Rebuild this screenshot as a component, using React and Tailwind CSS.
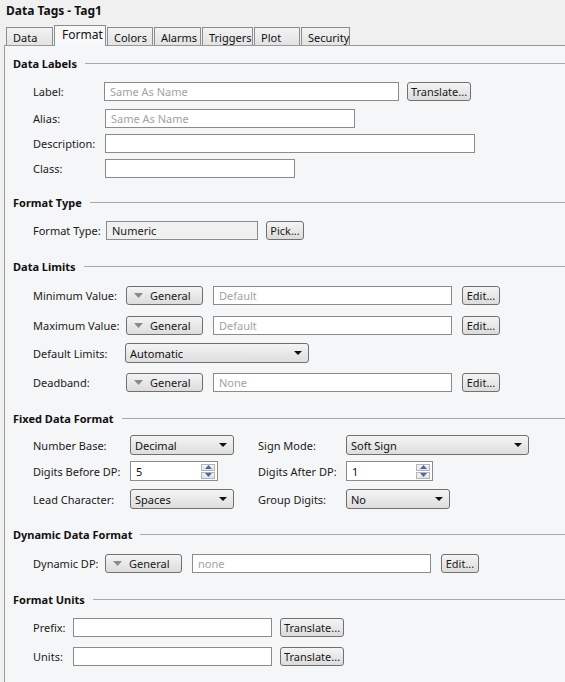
import React from "react";

const FONT = { fontFamily: '"Noto Sans", "Liberation Sans", sans-serif' };

function Heading({ children, className }) {
  return (
    <div className={`flex items-center h-[14px] pl-[8px] ${className}`}>
      <span className="font-bold text-[#111]">{children}</span>
      <div className="flex-1 h-px bg-[#a8a8a8] ml-[8px]" />
    </div>
  );
}

function Row({ className, children }) {
  return <div className={`flex items-center h-[20px] pl-[28px] ${className}`}>{children}</div>;
}

function Label({ w, children }) {
  return <div className={`${w} shrink-0 text-[#1a1a1a]`}>{children}</div>;
}

function Input({ w, placeholder, value, className = "", gray }) {
  return (
    <div
      className={`${w} h-[19px] shrink-0 border border-[#8b8b8b] ${gray ? "bg-[#f0f0f0]" : "bg-white"} flex items-center pl-[5px] ${className}`}
    >
      {placeholder && <span className="text-[#a3a3a3]">{placeholder}</span>}
      {value && <span className="text-[#1a1a1a]">{value}</span>}
    </div>
  );
}

function Btn({ w, children, className = "" }) {
  return (
    <div
      className={`${w} h-[19px] shrink-0 rounded-[3px] border border-[#707070] bg-gradient-to-b from-[#f4f4f4] to-[#dcdcdc] flex items-center justify-center text-[#1a1a1a] ${className}`}
    >
      {children}
    </div>
  );
}

function GeneralBtn() {
  return (
    <div className="w-[77px] h-[19px] shrink-0 rounded-[3px] border border-[#707070] bg-gradient-to-b from-[#f4f4f4] to-[#dcdcdc] flex items-center pl-[7px] text-[#1a1a1a]">
      <svg width="9" height="5" viewBox="0 0 9 5" className="mr-[7px]">
        <path d="M0 0 H9 L4.5 5 Z" fill="#8a8a8a" />
      </svg>
      General
    </div>
  );
}

function Select({ w, value, className = "" }) {
  return (
    <div
      className={`${w} h-[20px] shrink-0 rounded-[3px] border border-[#707070] bg-gradient-to-b from-[#f4f4f4] to-[#dedede] flex items-center justify-between pl-[4px] pr-[6px] text-[#111] ${className}`}
    >
      <span>{value}</span>
      <svg width="8" height="4" viewBox="0 0 8 4">
        <path d="M0 0 H8 L4 4 Z" fill="#111" />
      </svg>
    </div>
  );
}

function Spinner({ w, value, className = "" }) {
  return (
    <div className={`${w} h-[20px] shrink-0 border border-[#8b8b8b] bg-white flex items-center justify-between pl-[5px] pr-[2px] ${className}`}>
      <span className="text-[#111]">{value}</span>
      <div className="flex flex-col gap-px">
        <div className="w-[14px] h-[7px] border border-[#b5b5b5] bg-gradient-to-b from-[#f6f6f6] to-[#e2e2e2] flex items-center justify-center">
          <svg width="7" height="4" viewBox="0 0 7 4">
            <path d="M0 4 H7 L3.5 0 Z" fill="#4a66b3" />
          </svg>
        </div>
        <div className="w-[14px] h-[7px] border border-[#b5b5b5] bg-gradient-to-b from-[#f6f6f6] to-[#e2e2e2] flex items-center justify-center">
          <svg width="7" height="4" viewBox="0 0 7 4">
            <path d="M0 0 H7 L3.5 4 Z" fill="#4a66b3" />
          </svg>
        </div>
      </div>
    </div>
  );
}

const TABS = [
  { name: "Data", w: "w-[47px]" },
  { name: "Format", w: "w-[52px]", active: true },
  { name: "Colors", w: "w-[46px]" },
  { name: "Alarms", w: "w-[47px]" },
  { name: "Triggers", w: "w-[51px]" },
  { name: "Plot", w: "w-[46px]" },
  { name: "Security", w: "w-[49px]" },
];

export default function App() {
  return (
    <div className="w-[565px] h-[682px] overflow-hidden bg-[#f0f0f0] text-[11px] leading-none text-[#111]" style={FONT}>
      {/* title */}
      <div className="h-[22px] flex items-center pl-[6px] font-bold text-[12px]">Data Tags - Tag1</div>

      {/* tabs */}
      <div className="h-[23px] flex items-end pl-[6px] gap-[1px]">
        {TABS.map((t) =>
          t.active ? (
            <div
              key={t.name}
              className={`${t.w} h-[21px] -mb-px relative z-10 bg-[#f7f8f9] border border-b-0 border-[#8d8d8d] flex items-center pl-[7px] pb-[3px] text-[12px] text-[#111]`}
            >
              {t.name}
            </div>
          ) : (
            <div
              key={t.name}
              className={`${t.w} h-[18px] bg-gradient-to-b from-[#f2f2f2] to-[#e3e3e3] border border-b-0 border-[#8d8d8d] flex items-center pl-[6px] pt-[2px] text-[#111]`}
            >
              {t.name}
            </div>
          )
        )}
      </div>

      {/* content */}
      <div className="ml-[4px] h-[640px] border-l border-t border-[#9a9a9a] bg-[#f5f6f7] pt-px">
        <Heading className="mt-[9px]">Data Labels</Heading>
        <Row className="mt-[11px]">
          <Label w="w-[71px]">Label:</Label>
          <Input w="w-[295px]" placeholder="Same As Name" />
          <Btn w="w-[64px]" className="ml-[8px]">Translate...</Btn>
        </Row>
        <Row className="mt-[7px]">
          <Label w="w-[72px]">Alias:</Label>
          <Input w="w-[250px]" placeholder="Same As Name" />
        </Row>
        <Row className="mt-[5px]">
          <Label w="w-[72px]">Description:</Label>
          <Input w="w-[370px]" />
        </Row>
        <Row className="mt-[5px]">
          <Label w="w-[72px]">Class:</Label>
          <Input w="w-[190px]" />
        </Row>

        <Heading className="mt-[17px]">Format Type</Heading>
        <Row className="mt-[11px]">
          <Label w="w-[73px]">Format Type:</Label>
          <Input w="w-[152px]" value="Numeric" gray />
          <Btn w="w-[38px]" className="ml-[8px]">Pick...</Btn>
        </Row>

        <Heading className="mt-[19px]">Data Limits</Heading>
        <Row className="mt-[12px]">
          <Label w="w-[93px]">Minimum Value:</Label>
          <GeneralBtn />
          <Input w="w-[239px]" placeholder="Default" className="ml-[10px]" />
          <Btn w="w-[38px]" className="ml-[10px]">Edit...</Btn>
        </Row>
        <Row className="mt-[10px]">
          <Label w="w-[93px]">Maximum Value:</Label>
          <GeneralBtn />
          <Input w="w-[239px]" placeholder="Default" className="ml-[10px]" />
          <Btn w="w-[38px]" className="ml-[10px]">Edit...</Btn>
        </Row>
        <Row className="mt-[8px]">
          <Label w="w-[92px]">Default Limits:</Label>
          <Select w="w-[184px]" value="Automatic" />
        </Row>
        <Row className="mt-[9px]">
          <Label w="w-[93px]">Deadband:</Label>
          <GeneralBtn />
          <Input w="w-[239px]" placeholder="None" className="ml-[10px]" />
          <Btn w="w-[38px]" className="ml-[10px]">Edit...</Btn>
        </Row>

        <Heading className="mt-[19px]">Fixed Data Format</Heading>
        <Row className="mt-[10px]">
          <Label w="w-[97px]">Number Base:</Label>
          <Select w="w-[104px]" value="Decimal" />
          <Label w="w-[88px] ml-[24px]">Sign Mode:</Label>
          <Select w="w-[183px]" value="Soft Sign" />
        </Row>
        <Row className="mt-[6px]">
          <Label w="w-[97px]">Digits Before DP:</Label>
          <Spinner w="w-[88px]" value="5" />
          <Label w="w-[88px] ml-[40px]">Digits After DP:</Label>
          <Spinner w="w-[87px]" value="1" />
        </Row>
        <Row className="mt-[8px]">
          <Label w="w-[97px]">Lead Character:</Label>
          <Select w="w-[104px]" value="Spaces" />
          <Label w="w-[88px] ml-[24px]">Group Digits:</Label>
          <Select w="w-[104px]" value="No" />
        </Row>

        <Heading className="mt-[18px]">Dynamic Data Format</Heading>
        <Row className="mt-[12px]">
          <Label w="w-[72px]">Dynamic DP:</Label>
          <GeneralBtn />
          <Input w="w-[239px]" placeholder="none" className="ml-[10px]" />
          <Btn w="w-[38px]" className="ml-[10px]">Edit...</Btn>
        </Row>

        <Heading className="mt-[19px]">Format Units</Heading>
        <Row className="mt-[11px]">
          <Label w="w-[40px]">Prefix:</Label>
          <Input w="w-[199px]" />
          <Btn w="w-[64px]" className="ml-[8px]">Translate...</Btn>
        </Row>
        <Row className="mt-[9px]">
          <Label w="w-[40px]">Units:</Label>
          <Input w="w-[199px]" />
          <Btn w="w-[64px]" className="ml-[8px]">Translate...</Btn>
        </Row>
      </div>
    </div>
  );
}
